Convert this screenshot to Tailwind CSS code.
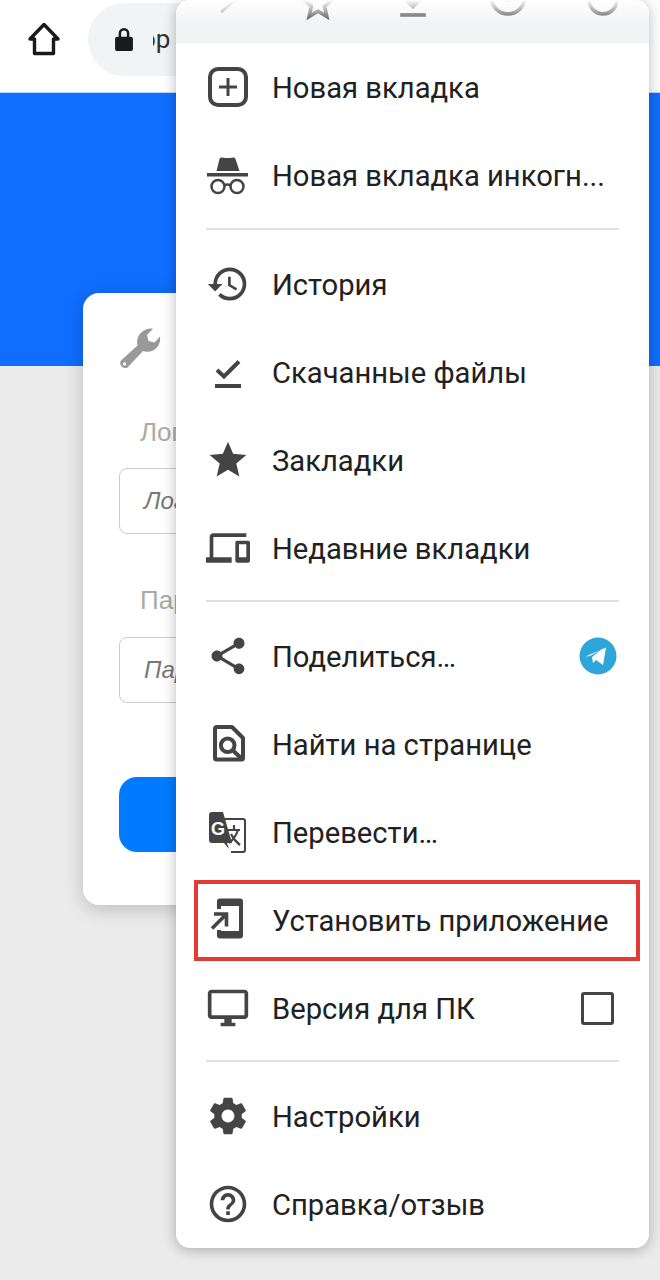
<!DOCTYPE html>
<html lang="ru">
<head>
  <meta charset="UTF-8" />
  <meta name="viewport" content="width=device-width, initial-scale=1.0"/>
  <title>Установить приложение</title>
  <script src="https://cdn.jsdelivr.net/npm/@tailwindcss/browser@4"></script>
</head>
<body class="relative h-[1280px] overflow-hidden bg-[#ebebeb] font-['Roboto',sans-serif] text-[#212121]">

  <!-- Browser toolbar -->
  <header class="h-[93px] bg-white border-b border-[#bcd6ff] flex items-start">
    <svg class="w-[34px] h-[34px] ml-[27px] mt-[22px] shrink-0" viewBox="0 0 34 34" fill="none" stroke="#1a1a1a" stroke-width="3.4" stroke-linejoin="round">
      <path d="M17 2.5 3 17h4.5v14.5h19V17H31z"/>
    </svg>
    <div class="ml-[27px] mt-[3px] h-[73px] w-[300px] rounded-full bg-[#f1f3f4] flex items-center">
      <svg class="w-[20px] h-[25px] ml-[26px] shrink-0" viewBox="0 0 22 28" fill="#1a1a1a">
        <path d="M5 11V7a6 6 0 0 1 12 0v4h1.5a2.5 2.5 0 0 1 2.5 2.5v11a2.5 2.5 0 0 1-2.5 2.5h-15A2.5 2.5 0 0 1 1 24.500v-11A2.500 2.500 0 0 1 3.500 11zm2.800 0h6.400V7a3.200 3.200 0 0 0-6.400 0z"/>
      </svg>
      <div class="ml-[19px] w-[30px] overflow-hidden text-[26px] text-[#333] whitespace-nowrap"><span class="block -ml-[12px]">op</span></div>
    </div>
  </header>

  <!-- Page behind the menu -->
  <div class="h-[273px] bg-[#0f6eff]"></div>
  <main class="relative -mt-[73px] ml-[83px] w-[494px] h-[612px] bg-white rounded-[16px] shadow-[0_4px_20px_rgba(0,0,0,0.2)] px-[36px] pt-[27px]">
    <svg class="w-[60px] h-[60px] -ml-[9px]" viewBox="0 0 60 60" fill="#999" fill-rule="evenodd">
      <path d="M11 40.500 27.500 25.500C26 19 29 12 36 9.500c2.500-1 5-1.200 7-.7L37 15l1.500 6 6 1.500 5.500-6c1 5.500-2 11.500-7 14-3.500 1.500-7 1.500-10 .5L17.500 47.500A5 5 0 0 1 11 40.500zM14.500 42.300a1.700 1.700 0 1 0 0 3.400 1.700 1.700 0 0 0 0-3.400z"/>
    </svg>
    <label class="block mt-[38px] ml-[21px] text-[26px] leading-[28px] text-[#aaa] font-['Liberation_Sans',sans-serif]">Логин</label>
    <div class="mt-[22px] h-[66px] rounded-[8px] border border-[#ccc] flex items-center pl-[24px] text-[24px] italic text-[#777] font-['Liberation_Sans',sans-serif]">Логин</div>
    <label class="block mt-[52px] ml-[21px] text-[26px] leading-[28px] text-[#aaa] font-['Liberation_Sans',sans-serif]">Пароль</label>
    <div class="mt-[23px] h-[66px] rounded-[8px] border border-[#ccc] flex items-center pl-[24px] text-[24px] italic text-[#777] font-['Liberation_Sans',sans-serif]">Пароль</div>
    <div class="mt-[74px] h-[75px] rounded-[18px] bg-[#007bff]"></div>
  </main>

  <!-- Browser menu -->
  <div class="absolute left-[176px] top-0 w-[473px] h-[1248px] bg-white rounded-[14px] overflow-hidden shadow-[0_2px_14px_rgba(0,0,0,0.28)] text-[29.2px]">
    <div class="relative h-[43px] bg-[#f1f3f4] overflow-hidden">
      <div class="flex justify-between pl-[25px] pr-[24px] -mt-[20px]">
        <svg class="w-[44px] h-[44px]" viewBox="0 0 24 24" fill="none" stroke="#999" stroke-width="1.6"><path d="M11 17.500 18.500 11"/></svg>
        <svg class="w-[44px] h-[44px]" viewBox="0 0 24 24" fill="none" stroke="#444" stroke-width="2"><path d="m12 5 2.200 5.200 5.600.5-4.200 3.700 1.200 5.500-4.800-2.900-4.800 2.900 1.200-5.500-4.200-3.700 5.600-.5z"/></svg>
        <svg class="w-[44px] h-[44px]" viewBox="0 0 24 24" fill="#444"><path d="M19 9h-4V3H9v6H5l7 7zM5 18v2h14v-2z"/></svg>
        <svg class="w-[44px] h-[44px]" viewBox="0 0 24 24" fill="none" stroke="#444" stroke-width="2"><circle cx="12" cy="9.500" r="9"/><path d="M12 6v6"/></svg>
        <svg class="w-[44px] h-[44px]" viewBox="0 0 24 24" fill="none" stroke="#444" stroke-width="2"><circle cx="12" cy="11" r="7.500"/></svg>
      </div>
      <div class="absolute inset-x-0 top-0 h-[24px] bg-gradient-to-b from-white to-white/0"></div>
    </div>

    <div class="h-[88px] flex items-center">
      <svg class="w-[44px] h-[44px] ml-[30px] mr-[22px] shrink-0" viewBox="0 0 44 44" fill="none" stroke="#444"><rect x="4" y="4" width="36" height="36" rx="8" stroke-width="4"/><path d="M22 13v18M13 22h18" stroke-width="3"/></svg>
      <span class="mt-[4px]">Новая вкладка</span>
    </div>
    <div class="h-[88px] flex items-center">
      <svg class="w-[44px] h-[44px] ml-[30px] mr-[22px] shrink-0" viewBox="0 0 44 44" fill="#444"><path d="M10.500 18 13.500 6q.5-2 2.500-1.500l3 .5h5l3-.5q2-.5 2.500 1.500L33.500 18z"/><rect x="1" y="20" width="41" height="3.500"/><g fill="none" stroke="#444" stroke-width="2.500"><circle cx="12" cy="33.500" r="6.500"/><circle cx="31" cy="33.500" r="6.500"/><path d="M18.500 32.500q3-2 6 0"/></g></svg>
      <span class="mt-[4px] whitespace-nowrap">Новая вкладка инкогн...</span>
    </div>
    <div class="h-[21px] px-[30px] pt-[9px]"><div class="h-[2px] bg-[#e0e0e0]"></div></div>

    <div class="h-[88px] flex items-center">
      <svg class="w-[44px] h-[44px] ml-[30px] mr-[22px] shrink-0" viewBox="0 0 24 24" fill="#444"><path d="M13 3a9 9 0 0 0-9 9H1l3.890 3.890.07.14L9 12H6c0-3.870 3.130-7 7-7s7 3.130 7 7-3.130 7-7 7c-1.930 0-3.680-.79-4.940-2.060l-1.420 1.420A8.954 8.954 0 0 0 13 21a9 9 0 0 0 0-18zm-1 5v5l4.280 2.540.72-1.210-3.500-2.080V8H12z"/></svg>
      <span class="mt-[4px]">История</span>
    </div>
    <div class="h-[88px] flex items-center">
      <svg class="w-[44px] h-[44px] ml-[30px] mr-[22px] shrink-0" viewBox="0 0 44 44" fill="none" stroke="#444" stroke-width="4"><path d="m11 20 7 6.500L33 11.500"/><path d="M9 36h26"/></svg>
      <span class="mt-[4px]">Скачанные файлы</span>
    </div>
    <div class="h-[88px] flex items-center">
      <svg class="w-[44px] h-[44px] ml-[30px] mr-[22px] shrink-0" viewBox="0 0 24 24" fill="#444"><path d="M12 17.270 18.180 21l-1.640-7.030L22 9.240l-7.190-.61L12 2 9.190 8.630 2 9.240l5.460 4.730L5.820 21z"/></svg>
      <span class="mt-[4px]">Закладки</span>
    </div>
    <div class="h-[88px] flex items-center">
      <svg class="w-[44px] h-[44px] ml-[30px] mr-[22px] shrink-0" viewBox="0 0 24 24" fill="#444"><path d="M4 6h18V4H4c-1.100 0-2 .9-2 2v11H0v3h14v-3H4V6zm19 2h-6c-.55 0-1 .45-1 1v10c0 .55.45 1 1 1h6c.55 0 1-.45 1-1V9c0-.55-.45-1-1-1zm-1 9h-4v-7h4v7z"/></svg>
      <span class="mt-[4px]">Недавние вкладки</span>
    </div>
    <div class="h-[20px] px-[30px] pt-[8px]"><div class="h-[2px] bg-[#e0e0e0]"></div></div>

    <div class="h-[88px] flex items-center">
      <svg class="w-[44px] h-[44px] ml-[30px] mr-[22px] shrink-0" viewBox="0 0 24 24" fill="#444"><path d="M18 16.080c-.76 0-1.440.3-1.960.77L8.910 12.700c.05-.23.09-.46.09-.7s-.04-.47-.09-.7l7.050-4.110c.54.5 1.250.81 2.040.81 1.660 0 3-1.340 3-3s-1.340-3-3-3-3 1.340-3 3c0 .24.04.47.09.7L8.040 9.810C7.500 9.310 6.790 9 6 9c-1.660 0-3 1.340-3 3s1.340 3 3 3c.79 0 1.500-.31 2.040-.81l7.120 4.160c-.05.21-.08.43-.08.65 0 1.610 1.310 2.920 2.920 2.920s2.920-1.310 2.920-2.920-1.310-2.920-2.920-2.920z"/></svg>
      <span class="flex-1 mt-[4px]">Поделиться…</span>
      <svg class="w-[38px] h-[38px] mr-[32px]" viewBox="0 0 38 38"><circle cx="19" cy="19" r="18.500" fill="#2ea6da"/><path d="M6.500 19.500 27 10.500 24 28l-7-5-3 3-1-6 10-8-12 7z" fill="#fff"/></svg>
    </div>
    <div class="h-[88px] flex items-center">
      <svg class="w-[44px] h-[44px] ml-[30px] mr-[22px] shrink-0" viewBox="0 0 44 44" fill="none" stroke="#444" stroke-width="4"><path d="M11 5h15l11 11v20a1.500 1.500 0 0 1-1.500 1.500h-25A1.500 1.500 0 0 1 9 36V7a2 2 0 0 1 2-2z" stroke-linejoin="round"/><circle cx="21.700" cy="23.300" r="6.800"/><path d="m26.500 28 9 8.500"/></svg>
      <span class="mt-[4px]">Найти на странице</span>
    </div>
    <div class="h-[88px] flex items-center">
      <svg class="w-[44px] h-[44px] ml-[30px] mr-[22px] shrink-0" viewBox="0 0 44 44">
        <path d="M17 9h20a2 2 0 0 1 2 2v29a2 2 0 0 1-2 2H25" fill="none" stroke="#444" stroke-width="2"/>
        <path d="M6 2h11l9 31h-5l2 6-5-6H6a3 3 0 0 1-3-3V5a3 3 0 0 1 3-3z" fill="#444"/>
        <text x="5" y="25" font-family="Liberation Sans, sans-serif" font-size="18" font-weight="700" fill="#fff">G</text>
        <path d="M22 20h12M28 15v5M32 20c-2 6-5 10-9 13M25 24c2 4 5 8 9 11" fill="none" stroke="#444" stroke-width="2.200"/>
      </svg>
      <span class="mt-[4px]">Перевести…</span>
    </div>
    <div class="h-[88px] flex items-center">
      <svg class="w-[44px] h-[44px] ml-[30px] mr-[22px] shrink-0" viewBox="0 0 44 44">
        <path d="M14 .5h20a3 3 0 0 1 3 3v34a3 3 0 0 1-3 3H14a3 3 0 0 1-3-3V32h4v1h18V8H15v3h-4V3.500a3 3 0 0 1 3-3z" fill="#444"/>
        <path d="M8 16h12.500v12.500M20 16.500 6 30.500" fill="none" stroke="#444" stroke-width="3.600"/>
      </svg>
      <span class="mt-[4px]">Установить приложение</span>
    </div>
    <div class="h-[88px] flex items-center">
      <svg class="w-[44px] h-[44px] ml-[30px] mr-[22px] shrink-0" viewBox="0 0 24 24" fill="#444"><path d="M21 2H3c-1.100 0-2 .9-2 2v12c0 1.100.9 2 2 2h7v2H8v2h8v-2h-2v-2h7c1.100 0 2-.9 2-2V4c0-1.100-.9-2-2-2zm0 14H3V4h18v12z"/></svg>
      <span class="flex-1 mt-[4px]">Версия для ПК</span>
      <div class="w-[33px] h-[33px] mr-[35px] rounded-[3px] border-[3.500px] border-[#444]"></div>
    </div>
    <div class="h-[20px] px-[30px] pt-[8px]"><div class="h-[2px] bg-[#e0e0e0]"></div></div>

    <div class="h-[88px] flex items-center">
      <svg class="w-[44px] h-[44px] ml-[30px] mr-[22px] shrink-0" viewBox="0 0 24 24" fill="#444"><path d="M19.430 12.980c.04-.32.07-.64.07-.98s-.03-.66-.07-.98l2.110-1.650c.19-.15.24-.42.12-.64l-2-3.460c-.12-.22-.39-.3-.61-.22l-2.490 1c-.52-.4-1.080-.73-1.690-.98l-.38-2.650C14.460 2.180 14.250 2 14 2h-4c-.25 0-.46.18-.49.42l-.38 2.650c-.61.25-1.170.59-1.690.98l-2.490-1c-.23-.09-.49 0-.61.22l-2 3.460c-.13.22-.07.49.12.64l2.110 1.650c-.04.32-.07.65-.07.98s.03.66.07.98l-2.110 1.650c-.19.15-.24.42-.12.64l2 3.460c.12.22.39.3.61.22l2.490-1c.52.4 1.080.73 1.690.98l.38 2.650c.03.24.24.42.49.42h4c.25 0 .46-.18.49-.42l.38-2.650c.61-.25 1.170-.59 1.690-.98l2.490 1c.23.09.49 0 .61-.22l2-3.460c.12-.22.07-.49-.12-.64l-2.110-1.650zM12 15.500c-1.930 0-3.500-1.570-3.500-3.500s1.570-3.500 3.500-3.500 3.500 1.570 3.500 3.500-1.570 3.500-3.500 3.500z"/></svg>
      <span class="mt-[4px]">Настройки</span>
    </div>
    <div class="h-[88px] flex items-center">
      <svg class="w-[44px] h-[44px] ml-[30px] mr-[22px] shrink-0" viewBox="0 0 24 24" fill="#444"><path d="M11 18h2v-2h-2v2zm1-16C6.480 2 2 6.480 2 12s4.480 10 10 10 10-4.480 10-10S17.520 2 12 2zm0 18c-4.410 0-8-3.590-8-8s3.590-8 8-8 8 3.590 8 8-3.590 8-8 8zm0-14c-2.210 0-4 1.790-4 4h2c0-1.100.9-2 2-2s2 .9 2 2c0 2-3 1.750-3 5h2c0-2.250 3-2.500 3-5 0-2.210-1.790-4-4-4z"/></svg>
      <span class="mt-[4px]">Справка/отзыв</span>
    </div>
  </div>

  <!-- Red highlight drawn over the screenshot -->
  <div class="absolute left-[194px] top-[880px] w-[446px] h-[81px] border-[4px] border-[#e53935]"></div>

</body>
</html>
